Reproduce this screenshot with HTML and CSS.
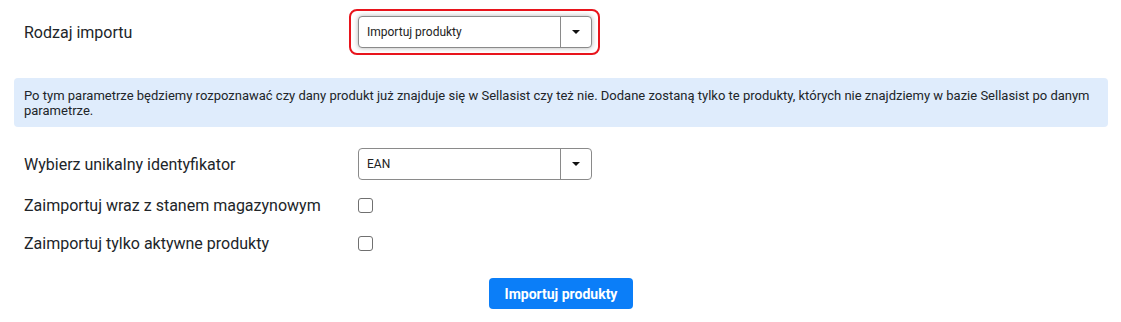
FILE: index.html
```html
<!DOCTYPE html>
<html lang="pl">
<head>
  <meta charset="UTF-8">
  <meta name="viewport" content="width=device-width, initial-scale=1.0"/>
  <title>Import produktów</title>
  <link rel="stylesheet" href="styles.css">
</head>
<body>
  <main class="import-form">
    <div class="row row-first">
      <label class="label">Rodzaj importu</label>
      <div class="highlight">
        <div class="select">
          <span class="select-value">Importuj produkty</span>
          <span class="select-arrow"></span>
        </div>
      </div>
    </div>

    <div class="info">
      Po tym parametrze będziemy rozpoznawać czy dany produkt już znajduje się w Sellasist czy też nie. Dodane zostaną tylko te produkty, których nie znajdziemy w bazie Sellasist po danym parametrze.
    </div>

    <div class="row row-select">
      <label class="label">Wybierz unikalny identyfikator</label>
      <div class="select">
        <span class="select-value">EAN</span>
        <span class="select-arrow"></span>
      </div>
    </div>
    <div class="row row-check">
      <label class="label" for="withStock">Zaimportuj wraz z stanem magazynowym</label>
      <input type="checkbox" id="withStock" class="check">
    </div>
    <div class="row row-check">
      <label class="label" for="onlyActive">Zaimportuj tylko aktywne produkty</label>
      <input type="checkbox" id="onlyActive" class="check">
    </div>

    <div class="actions">
      <button class="btn-primary">Importuj produkty</button>
    </div>
  </main>
</body>
</html>
```

FILE: styles.css
```css
body {
  font-family: Roboto, 'Liberation Sans', sans-serif;
  background: #fff;
  color: #212529;
  margin: 0;
  padding: 0;
}
.import-form {
  padding: 9px 13px 0 14px;
}
.row {
  display: flex;
  align-items: center;
  padding-left: 10px;
}
.label {
  width: 334px;
  font-size: 16px;
  flex-shrink: 0;
}
.row-first {
  height: 46px;
}
.highlight {
  margin-left: -9px;
  border: 2px solid #e8141c;
  border-radius: 8px;
  padding: 5px 6px 5px 7px;
}
.highlight .select {
  box-shadow: 0 0 5px rgba(0,0,0,0.3);
}
.select {
  display: flex;
  width: 234px;
  height: 32px;
  box-sizing: border-box;
  border: 1px solid #8a8a8a;
  border-radius: 4px;
  background: #fff;
}
.select-value {
  flex: 1;
  display: flex;
  align-items: center;
  padding-left: 8px;
  font-size: 12px;
  color: #222;
}
.select-arrow {
  width: 30px;
  border-left: 1px solid #8a8a8a;
  position: relative;
}
.select-arrow::after {
  content: "";
  position: absolute;
  left: 11px;
  top: 13px;
  border-left: 4px solid transparent;
  border-right: 4px solid transparent;
  border-top: 4px solid #111;
}
.info {
  margin-top: 23px;
  background: #dfecfc;
  border-radius: 4px;
  padding: 10px 10px 9px 10px;
  font-size: 13px;
  line-height: 15px;
}
.row-select {
  margin-top: 21px;
  height: 32px;
}
.row-check {
  height: 38px;
}
.row-select + .row-check {
  margin-top: 6px;
}
.check {
  appearance: none;
  margin: 0;
  width: 15px;
  height: 15px;
  border: 1px solid #707070;
  border-radius: 3px;
  background: #fff;
}
.actions {
  display: flex;
  justify-content: center;
  margin-top: 16px;
}
.btn-primary {
  font-family: inherit;
  font-size: 14px;
  font-weight: 700;
  color: #fff;
  background-color: #0b7ef8;
  border: none;
  border-radius: 4px;
  height: 31px;
  padding: 0 16px;
  cursor: pointer;
}
```
